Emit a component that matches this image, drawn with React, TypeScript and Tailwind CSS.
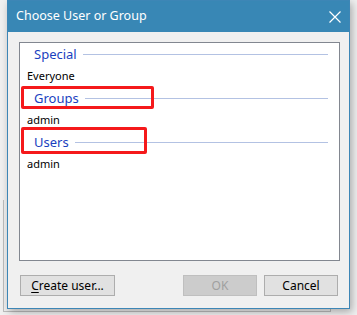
import React from 'react';

const font = { fontFamily: '"Noto Sans", "Open Sans", Arial, sans-serif' };

const Header: React.FC<{ label: string }> = ({ label }) => (
    <div className="h-[22px] flex items-center pl-[14px] pr-[11px] gap-[6px]">
        <span className="text-[13px] text-[#1a3fc0] leading-none">{label}</span>
        <div className="flex-1 h-px bg-[#b3c2e3]" />
    </div>
);

const Item: React.FC<{ label: string }> = ({ label }) => (
    <div className="h-[22px] flex items-center pl-[7px] pb-[2px] text-[11px] text-black leading-none">{label}</div>
);

export default function App() {
    return (
        <div className="relative w-[357px] h-[315px] bg-[#f0f0f0] overflow-hidden" style={font}>
            {/* window behind the dialog */}
            <div className="absolute left-[3px] top-[200px] w-[328px] h-[112px] border-l border-b border-r border-[#bdbdbd]" />

            {/* Dialog */}
            <div className="absolute left-[7px] top-0 w-[343px] h-[309px] border border-[#3d86b6] bg-[#f0f0f0] flex flex-col shadow-[2px_3px_8px_rgba(0,0,0,0.3)]">
                <div className="h-[31px] bg-[#3887b5] flex items-center justify-between pl-[8px] pr-[6px]">
                    <span className="text-white text-[12.5px]">Choose User or Group</span>
                    <svg width="14" height="14" viewBox="0 0 14 14" className="mr-[1px]">
                        <path d="M1.5 1.5 L12.5 12.5 M12.5 1.5 L1.5 12.5" stroke="white" strokeWidth="1.2" fill="none" />
                    </svg>
                </div>

                <div className="relative mt-[10px] ml-[11px] w-[321px] h-[219px] bg-white border border-[#828790]">
                    <Header label="Special" />
                    <Item label="Everyone" />
                    <Header label="Groups" />
                    <Item label="admin" />
                    <Header label="Users" />
                    <Item label="admin" />

                    {/* annotation boxes */}
                    <div className="absolute left-[1px] top-[43px] w-[133px] h-[23px] border-[3px] border-[#f5191b] rounded-[2px]" />
                    <div className="absolute left-[1px] top-[84px] w-[126px] h-[27px] border-[3px] border-[#f5191b] rounded-[2px]" />
                </div>

                <div className="mt-[14px] flex items-center pl-[12px] pr-[11px] text-[12px]">
                    <button className="w-[95px] h-[21px] bg-[#e1e1e1] border border-[#adadad] text-black leading-none">
                        <span className="underline underline-offset-2">C</span>reate user...
                    </button>
                    <div className="flex-1" />
                    <button className="w-[74px] h-[21px] bg-[#cccccc] border border-[#bfbfbf] text-[#a0a0a0] leading-none">OK</button>
                    <button className="ml-[7px] w-[74px] h-[21px] bg-[#e1e1e1] border border-[#adadad] text-black leading-none">Cancel</button>
                </div>
            </div>
        </div>
    );
}
